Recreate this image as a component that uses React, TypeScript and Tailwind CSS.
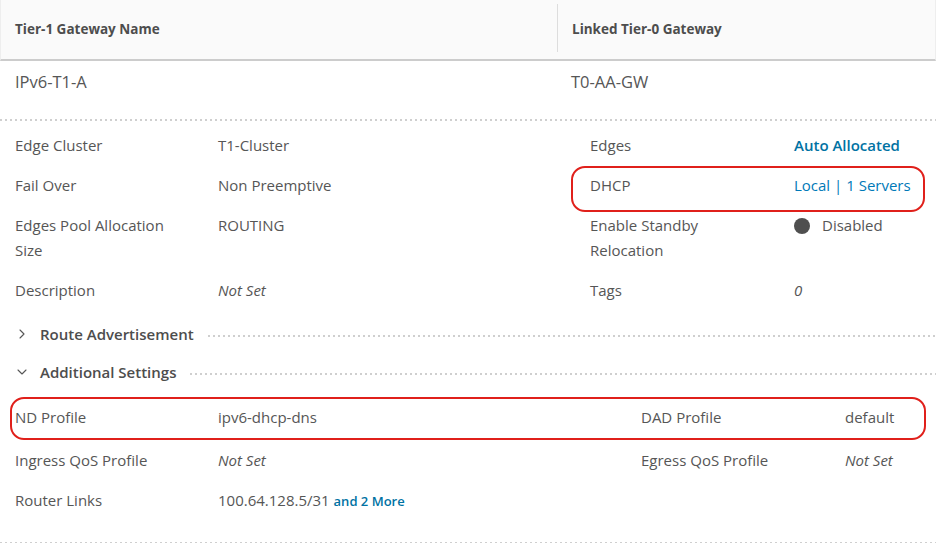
import { ChevronRight, ChevronDown } from 'lucide-react';
import { twMerge } from 'tailwind-merge';

const font = { fontFamily: '"Open Sans", "Liberation Sans", sans-serif' };

function Dots({ className = '' }: { className?: string }) {
  return (
    <div
      className={twMerge(
        'h-[2px] bg-[linear-gradient(to_right,#cfcfcf_2px,transparent_2px)] bg-[length:5px_2px]',
        className
      )}
    />
  );
}

function Cell({ children, className = '' }: { children: React.ReactNode; className?: string }) {
  return <div className={twMerge('text-[15px] leading-[25px] text-[#565656]', className)}>{children}</div>;
}

function Annotate({ className }: { className: string }) {
  return (
    <div className={twMerge('pointer-events-none absolute rounded-[14px] border-2 border-[#e0201b]', className)} />
  );
}

function Section({ open, label }: { open: boolean; label: string }) {
  const Icon = open ? ChevronDown : ChevronRight;
  return (
    <div className="flex h-[38px] items-center pl-[14px]">
      <Icon className="h-[16px] w-[16px] text-[#565656]" strokeWidth={1.6} />
      <span className="ml-[10px] text-[15px] font-semibold text-[#4d4d4d]">{label}</span>
      <Dots className="ml-[14px] mt-[4px] flex-1" />
    </div>
  );
}

export default function App() {
  return (
    <div className="h-[543px] w-[936px] overflow-hidden bg-white" style={font}>
      {/* Header */}
      <div className="flex h-[61px] items-center border-x border-b-2 border-x-[#eeeeee] border-b-[#cccccc] bg-[#fafafa]">
        <div className="flex w-[556px] items-center pl-[14px]">
          <span className="text-[13.5px] font-bold text-[#4d4d4d]">Tier-1 Gateway Name</span>
        </div>
        <div className="h-[48px] w-px self-start mt-[4px] bg-[#dddddd]" />
        <div className="flex flex-1 items-center pl-[14px]">
          <span className="text-[13.5px] font-bold text-[#4d4d4d]">Linked Tier-0 Gateway</span>
        </div>
      </div>

      {/* Row */}
      <div className="flex h-[45px] items-center pb-[2px]">
        <Cell className="w-[571px] pl-[15px] text-[16.5px]">IPv6-T1-A</Cell>
        <Cell className="text-[16.5px]">T0-AA-GW</Cell>
      </div>
      <Dots className="mt-[13px]" />

      {/* Details */}
      <div className="relative grid grid-cols-[218px_372px_204px_1fr] gap-y-[15px] pt-[12px]">
        <Cell className="pl-[15px]">Edge Cluster</Cell>
        <Cell>T1-Cluster</Cell>
        <Cell>Edges</Cell>
        <Cell className="font-semibold text-[#0072a3]">Auto Allocated</Cell>

        <Cell className="pl-[15px]">Fail Over</Cell>
        <Cell>Non Preemptive</Cell>
        <Cell>DHCP</Cell>
        <Cell className="text-[#0079b8]">Local | 1 Servers</Cell>

        <Cell className="pl-[15px] pr-[32px]">Edges Pool Allocation Size</Cell>
        <Cell>ROUTING</Cell>
        <Cell className="pr-[40px]">Enable Standby Relocation</Cell>
        <Cell className="flex items-start">
          <span className="mt-[5px] h-[16px] w-[16px] rounded-full bg-[#4f4f4f]" />
          <span className="ml-[12px]">Disabled</span>
        </Cell>

        <Cell className="pl-[15px]">Description</Cell>
        <Cell className="italic">Not Set</Cell>
        <Cell>Tags</Cell>
        <Cell className="italic">0</Cell>

        <Annotate className="left-[571px] top-[45px] h-[46px] w-[354px]" />
      </div>

      <div className="mt-[12px]">
        <Section open={false} label="Route Advertisement" />
        <Section open label="Additional Settings" />
      </div>

      {/* Additional settings */}
      <div className="relative mt-[14px] grid grid-cols-[218px_423px_204px_1fr] gap-y-[15px]">
        <Cell className="pl-[15px] pb-[3px]">ND Profile</Cell>
        <Cell>ipv6-dhcp-dns</Cell>
        <Cell>DAD Profile</Cell>
        <Cell>default</Cell>

        <Cell className="pl-[15px]">Ingress QoS Profile</Cell>
        <Cell className="italic">Not Set</Cell>
        <Cell>Egress QoS Profile</Cell>
        <Cell className="italic">Not Set</Cell>

        <Cell className="pl-[15px]">Router Links</Cell>
        <Cell className="col-span-3">
          100.64.128.5/31{' '}
          <span className="text-[13px] font-semibold text-[#0072a3]">and 2 More</span>
        </Cell>

        <Annotate className="left-[10px] top-[-8px] h-[43px] w-[916px]" />
      </div>

      <Dots className="mt-[28px]" />
    </div>
  );
}
